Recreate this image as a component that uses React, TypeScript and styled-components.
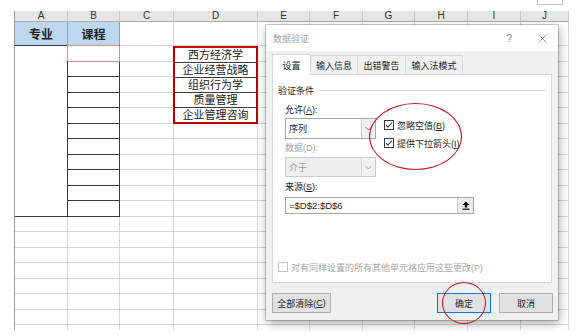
import styled, { createGlobalStyle } from 'styled-components'

const GlobalStyle = createGlobalStyle`
  html, body {
    margin: 0;
    padding: 0;
    background: #fff;
  }
  body {
    width: 579px;
    height: 335px;
    overflow: hidden;
    font-family: 'Liberation Sans', 'Noto Sans CJK SC', sans-serif;
    color: #1e1e1e;
  }
`

const colWidths = [53, 52, 54, 84, 52, 53, 52, 53, 53, 48]
const letters = ['A', 'B', 'C', 'D', 'E', 'F', 'G', 'H', 'I', 'J']
const courses = ['西方经济学', '企业经营战略', '组织行为学', '质量管理', '企业管理咨询']
const DATA_ROWS = 19

const Page = styled.div`
  position: relative;
  width: 579px;
  height: 335px;
`

const TopStrip = styled.div`
  height: 11px;
  display: flex;
  justify-content: flex-end;
`

const MiniBox = styled.div`
  width: 24px;
  height: 4px;
  margin-right: 16px;
  border: 1px solid #c4c4c4;
  border-top: none;
`

const Sheet = styled.div`
  margin-left: 14px;
  height: 319px;
  overflow: hidden;
  display: grid;
  grid-template-columns: ${colWidths.map(w => `${w}px`).join(' ')};
  grid-template-rows: 11px 24px repeat(${DATA_ROWS}, 15.5px);
  border-left: 1px solid #9a9a9a;
  width: max-content;
`

const ColHead = styled.div<{ $c: number }>`
  grid-row: 1;
  grid-column: ${p => p.$c};
  background: #e6e6e6;
  border-right: 1px solid #c8c8c8;
  border-bottom: 1px solid #ababab;
  font-size: 10px;
  line-height: 10px;
  color: #333;
  display: flex;
  align-items: center;
  justify-content: center;
`

const Cell = styled.div<{ $r: number; $c: number }>`
  grid-row: ${p => p.$r};
  grid-column: ${p => p.$c};
  border-right: 1px solid #d6d6d6;
  border-bottom: 1px solid #d6d6d6;
`

const TitleCell = styled.div<{ $c: number }>`
  grid-row: 2;
  grid-column: ${p => p.$c};
  background: #bdd7ee;
  border-right: 1px solid #9a9a9a;
  border-bottom: 1px solid #333;
  display: flex;
  align-items: center;
  justify-content: center;
  font-family: 'Noto Sans CJK SC', sans-serif;
  font-weight: 700;
  font-size: 12px;
  line-height: 1;
  color: #222;
`

const MergedCell = styled.div`
  grid-row: 3 / span 11;
  grid-column: 1;
  border-right: 1px solid #3a3a3a;
  border-bottom: 1px solid #3a3a3a;
`

const BoxCell = styled.div<{ $r: number; $selected?: boolean }>`
  grid-row: ${p => p.$r};
  grid-column: 2;
  position: relative;
  border-right: 1px solid ${p => (p.$selected ? '#e48c8c' : '#3a3a3a')};
  border-bottom: 1px solid ${p => (p.$selected ? '#e48c8c' : '#3a3a3a')};
  box-shadow: ${p => (p.$selected ? '-1px -1px 0 #e48c8c' : 'none')};
  z-index: ${p => (p.$selected ? 1 : 0)};
`

const ListBox = styled.div`
  grid-row: 3 / span 5;
  grid-column: 4;
  margin-left: -1px;
  border: 2px solid #c00000;
  display: flex;
  flex-direction: column;
  position: relative;
  z-index: 1;
  overflow: hidden;
`

const ListItem = styled.div`
  flex: 1;
  min-height: 0;
  display: flex;
  align-items: center;
  justify-content: center;
  font-family: 'Noto Sans CJK SC', sans-serif;
  font-size: 11px;
  line-height: 11px;
  color: #222;
  border-bottom: 1px solid #3a3a3a;
  &:last-child {
    border-bottom: none;
  }
`

/* dialog */

const Dialog = styled.div`
  position: absolute;
  left: 266px;
  top: 25px;
  width: 292px;
  height: 295px;
  box-sizing: border-box;
  background: #f0f0f0;
  box-shadow: 0 0 0 1px rgba(0, 0, 0, 0.18), 1px 3px 9px rgba(0, 0, 0, 0.35);
  display: flex;
  flex-direction: column;
  font-family: 'Liberation Sans', 'Noto Sans CJK SC', sans-serif;
  font-size: 9px;
  z-index: 5;
`

const TitleBar = styled.div`
  height: 26px;
  background: #fff;
  display: flex;
  align-items: center;
  padding: 0 11px 0 7px;
  color: #a3a3a3;
`

const TitleText = styled.span`
  flex: 1;
  font-size: 9px;
`

const Help = styled.span`
  font-size: 10px;
  color: #8c8c8c;
  margin-right: 26px;
`

const TabRow = styled.div`
  height: 21px;
  margin: 2px 6px 0;
  display: flex;
  align-items: flex-end;
`

const Tab = styled.div<{ $w: number; $active?: boolean }>`
  width: ${p => p.$w}px;
  height: ${p => (p.$active ? 21 : 19)}px;
  box-sizing: border-box;
  background: ${p => (p.$active ? '#fff' : '#f0f0f0')};
  border: 1px solid #d9d9d9;
  border-bottom: none;
  border-left-width: ${p => (p.$active ? 1 : 0)}px;
  margin-bottom: ${p => (p.$active ? -1 : 0)}px;
  position: relative;
  z-index: ${p => (p.$active ? 1 : 0)};
  display: flex;
  align-items: center;
  justify-content: center;
  font-size: 9px;
  color: #1e1e1e;
`

const Panel = styled.div`
  height: 209px;
  margin: 0 6px;
  box-sizing: border-box;
  background: #fff;
  border: 1px solid #d9d9d9;
  padding: 9px 5px 10px;
  display: flex;
  flex-direction: column;
`

const SectionHead = styled.div`
  height: 12px;
  display: flex;
  align-items: center;
  gap: 4px;
`

const Rule = styled.div`
  flex: 1;
  height: 1px;
  background: #dcdcdc;
`

const FormTop = styled.div`
  display: flex;
  gap: 8px;
  margin: 8px 0 0 7px;
`

const LeftCol = styled.div`
  width: 91px;
  display: flex;
  flex-direction: column;
`

const RightCol = styled.div`
  padding-top: 16px;
  display: flex;
  flex-direction: column;
  gap: 8px;
`

const FieldLabel = styled.div<{ $disabled?: boolean; $gap?: number; $indent?: number }>`
  height: 12px;
  line-height: 12px;
  margin-top: ${p => p.$gap ?? 0}px;
  margin-left: ${p => p.$indent ?? 0}px;
  color: ${p => (p.$disabled ? '#a6a6a6' : '#1e1e1e')};
`

const U = styled.span`
  text-decoration: underline;
`

const Select = styled.div<{ $disabled?: boolean; $gap: number; $h: number }>`
  height: ${p => p.$h}px;
  margin-top: ${p => p.$gap}px;
  box-sizing: border-box;
  display: flex;
  border: 1px solid ${p => (p.$disabled ? '#cccccc' : '#a8a8a8')};
  background: ${p => (p.$disabled ? '#eeeeee' : '#fff')};
  color: ${p => (p.$disabled ? '#9a9a9a' : '#1e1e1e')};
`

const SelectValue = styled.div`
  flex: 1;
  display: flex;
  align-items: center;
  padding-left: 3px;
`

const SelectArrow = styled.div<{ $disabled?: boolean }>`
  width: 13px;
  border-left: 1px solid ${p => (p.$disabled ? '#d6d6d6' : '#c8c8c8')};
  background: ${p => (p.$disabled ? '#f2f2f2' : '#f0f0f0')};
  display: flex;
  align-items: center;
  justify-content: center;
  color: ${p => (p.$disabled ? '#a0a0a0' : '#6e6e6e')};
`

const CheckRow = styled.label<{ $disabled?: boolean }>`
  height: 10px;
  display: flex;
  align-items: center;
  gap: 3px;
  color: ${p => (p.$disabled ? '#a6a6a6' : '#1e1e1e')};
  white-space: nowrap;
`

const Box = styled.span<{ $disabled?: boolean }>`
  width: 10px;
  height: 10px;
  box-sizing: border-box;
  border: 1px solid ${p => (p.$disabled ? '#c4c4c4' : '#3c3c3c')};
  background: #fff;
  display: flex;
  align-items: center;
  justify-content: center;
`

const SourceInput = styled.div`
  width: 189px;
  height: 17px;
  margin: 4px 0 0 7px;
  box-sizing: border-box;
  border: 1px solid #a8a8a8;
  display: flex;
`

const SourceText = styled.div`
  flex: 1;
  display: flex;
  align-items: center;
  padding-left: 3px;
  font-size: 9.5px;
`

const CollapseButton = styled.div`
  width: 15px;
  border-left: 1px solid #c8c8c8;
  background: #ececec;
  display: flex;
  align-items: center;
  justify-content: center;
`

const Spacer = styled.div`
  flex: 1;
`

const ButtonRow = styled.div`
  height: 20px;
  margin-top: 10px;
  padding: 0 5px 0 6px;
  display: flex;
  gap: 8px;
`

const Button = styled.div<{ $w: number; $primary?: boolean; $push?: boolean }>`
  width: ${p => p.$w}px;
  box-sizing: border-box;
  background: #e1e1e1;
  border: 1px solid ${p => (p.$primary ? '#0078d7' : '#adadad')};
  margin-left: ${p => (p.$push ? 'auto' : '0')};
  display: flex;
  align-items: center;
  justify-content: center;
  color: #1e1e1e;
`

const Ring = styled.div<{ $x: number; $y: number; $w: number; $h: number }>`
  position: absolute;
  left: ${p => p.$x}px;
  top: ${p => p.$y}px;
  width: ${p => p.$w}px;
  height: ${p => p.$h}px;
  box-sizing: border-box;
  border: 1.5px solid #c4121f;
  border-radius: 50%;
  z-index: 10;
  pointer-events: none;
`

const Chevron = () => (
  <svg width="7" height="5" viewBox="0 0 7 5">
    <polyline points="0.5,1 3.5,4 6.5,1" fill="none" stroke="currentColor" strokeWidth="1" />
  </svg>
)

const Check = () => (
  <svg width="8" height="8" viewBox="0 0 8 8">
    <polyline points="1,4.2 3,6.2 7,1.5" fill="none" stroke="#3c3c3c" strokeWidth="1.1" />
  </svg>
)

const CloseIcon = () => (
  <svg width="9" height="9" viewBox="0 0 9 9">
    <path d="M0.5 0.5 L8.5 8.5 M8.5 0.5 L0.5 8.5" stroke="#8c8c8c" strokeWidth="0.9" />
  </svg>
)

const CollapseIcon = () => (
  <svg width="8" height="9" viewBox="0 0 8 9">
    <path d="M4 0.5 L7.5 4 L5.2 4 L5.2 6.5 L2.8 6.5 L2.8 4 L0.5 4 Z" fill="#111" />
    <rect x="0.5" y="7.6" width="7" height="1.2" fill="#111" />
  </svg>
)

const tabs = [
  { label: '设置', w: 39, active: true },
  { label: '输入信息', w: 47 },
  { label: '出错警告', w: 48 },
  { label: '输入法模式', w: 57 },
]

const SpreadSheet = () => {
  const cells = []
  for (let c = 3; c <= 10; c++) cells.push(<Cell key={`r2-${c}`} $r={2} $c={c} />)
  for (let r = 3; r < 3 + DATA_ROWS; r++) {
    for (let c = 1; c <= 10; c++) {
      if (c === 1 && r <= 13) continue
      if (c === 2 && r <= 13) continue
      if (c === 4 && r <= 7) continue
      cells.push(<Cell key={`${r}-${c}`} $r={r} $c={c} />)
    }
  }
  return (
    <Sheet>
      {letters.map((l, i) => (
        <ColHead key={l} $c={i + 1}>
          {l}
        </ColHead>
      ))}
      <TitleCell $c={1}>专业</TitleCell>
      <TitleCell $c={2}>课程</TitleCell>
      {cells}
      <MergedCell />
      {Array.from({ length: 11 }, (_, i) => (
        <BoxCell key={i} $r={3 + i} $selected={i === 0} />
      ))}
      <ListBox>
        {courses.map(c => (
          <ListItem key={c}>{c}</ListItem>
        ))}
      </ListBox>
    </Sheet>
  )
}

const ValidationDialog = () => (
  <Dialog>
    <TitleBar>
      <TitleText>数据验证</TitleText>
      <Help>?</Help>
      <CloseIcon />
    </TitleBar>
    <TabRow>
      {tabs.map(t => (
        <Tab key={t.label} $w={t.w} $active={t.active}>
          {t.label}
        </Tab>
      ))}
    </TabRow>
    <Panel>
      <SectionHead>
        <span>验证条件</span>
        <Rule />
      </SectionHead>
      <FormTop>
        <LeftCol>
          <FieldLabel>
            允许(<U>A</U>):
          </FieldLabel>
          <Select $gap={2} $h={21}>
            <SelectValue>序列</SelectValue>
            <SelectArrow>
              <Chevron />
            </SelectArrow>
          </Select>
          <FieldLabel $disabled $gap={3}>
            数据(D):
          </FieldLabel>
          <Select $disabled $gap={3} $h={20}>
            <SelectValue>介于</SelectValue>
            <SelectArrow $disabled>
              <Chevron />
            </SelectArrow>
          </Select>
        </LeftCol>
        <RightCol>
          <CheckRow>
            <Box>
              <Check />
            </Box>
            <span>
              忽略空值(<U>B</U>)
            </span>
          </CheckRow>
          <CheckRow>
            <Box>
              <Check />
            </Box>
            <span>
              提供下拉箭头(<U>I</U>)
            </span>
          </CheckRow>
        </RightCol>
      </FormTop>
      <FieldLabel $gap={4} $indent={7}>
        来源(<U>S</U>):
      </FieldLabel>
      <SourceInput>
        <SourceText>=$D$2:$D$6</SourceText>
        <CollapseButton>
          <CollapseIcon />
        </CollapseButton>
      </SourceInput>
      <Spacer />
      <CheckRow $disabled>
        <Box $disabled />
        <span>对有同样设置的所有其他单元格应用这些更改(P)</span>
      </CheckRow>
    </Panel>
    <ButtonRow>
      <Button $w={59}>
        全部清除(<U>C</U>)
      </Button>
      <Button $w={54} $primary $push>
        确定
      </Button>
      <Button $w={54}>取消</Button>
    </ButtonRow>
  </Dialog>
)

export default function App() {
  return (
    <Page>
      <GlobalStyle />
      <TopStrip>
        <MiniBox />
      </TopStrip>
      <SpreadSheet />
      <ValidationDialog />
      <Ring $x={369} $y={103} $w={93} $h={67} />
      <Ring $x={442} $y={282} $w={44} $h={42} />
    </Page>
  )
}
